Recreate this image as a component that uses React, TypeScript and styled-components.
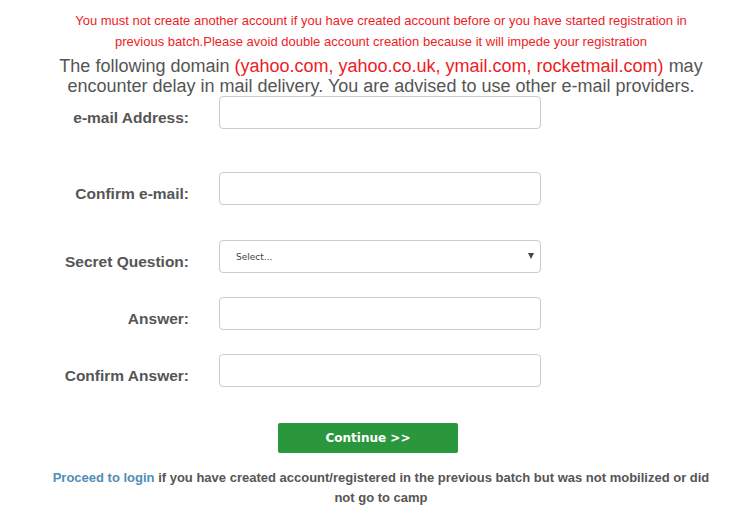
import React from 'react';
import styled, { createGlobalStyle } from 'styled-components';

const GlobalStyle = createGlobalStyle`
  body {
    margin: 0;
    background: #ffffff;
    font-family: "Liberation Sans", Arial, sans-serif;
  }
`;

const Page = styled.div`
  width: 762px;
  padding-top: 10px;
`;

const Warning = styled.p`
  margin: 0 auto;
  width: 625px;
  text-align: center;
  color: #ee1c25;
  font-size: 13px;
  line-height: 21px;
`;

const Notice = styled.p`
  margin: 4px auto 0;
  width: 680px;
  text-align: center;
  color: #555555;
  font-size: 18px;
  line-height: 20px;
`;

const Red = styled.span`
  color: #ee1c25;
`;

const Form = styled.form`
  display: flex;
  flex-direction: column;
  width: 541px;
`;

const Row = styled.div<{ gap: number }>`
  display: grid;
  grid-template-columns: 189px 322px;
  column-gap: 30px;
  align-items: start;
  margin-bottom: ${p => p.gap}px;
`;

const Label = styled.label`
  text-align: right;
  color: #555555;
  font-weight: 700;
  font-size: 15.5px;
  line-height: 17px;
  padding-top: 13px;
`;

const Input = styled.input`
  box-sizing: border-box;
  width: 322px;
  height: 33px;
  border: 1px solid #cccccc;
  border-radius: 4px;
  padding: 6px 12px;
  font-size: 12px;
  margin: 0;
`;

const SelectWrap = styled.div`
  position: relative;
  width: 322px;
`;

const Select = styled.select`
  box-sizing: border-box;
  width: 322px;
  height: 33px;
  border: 1px solid #cccccc;
  border-radius: 4px;
  padding: 0 12px 0 16px;
  font-family: "DejaVu Sans", Verdana, sans-serif;
  font-size: 9px;
  color: #444444;
  background: #ffffff;
  appearance: none;
  margin: 0;
`;

const Caret = styled.span`
  position: absolute;
  right: 7px;
  top: 13px;
  width: 0;
  height: 0;
  border-left: 3px solid transparent;
  border-right: 3px solid transparent;
  border-top: 6px solid #444444;
  pointer-events: none;
`;

const Actions = styled.div`
  display: flex;
  justify-content: center;
  width: 736px;
  margin-top: 36px;
`;

const Button = styled.button`
  width: 180px;
  height: 30px;
  background: #2a973c;
  color: #ffffff;
  border: none;
  border-radius: 2px;
  font-family: "DejaVu Sans", Verdana, sans-serif;
  font-size: 12px;
  font-weight: 600;
  padding: 0;
`;

const Footer = styled.p`
  margin: 15px auto 0;
  width: 670px;
  text-align: center;
  color: #555555;
  font-size: 13px;
  font-weight: 700;
  line-height: 20px;
`;

const LoginLink = styled.a`
  color: #4f8db8;
  text-decoration: none;
`;

const rows = [
  { label: 'e-mail Address:', gap: 43 },
  { label: 'Confirm e-mail:', gap: 35 },
  { label: 'Secret Question:', gap: 24, select: true },
  { label: 'Answer:', gap: 24 },
  { label: 'Confirm Answer:', gap: 0 },
];

const App: React.FC = () => {
  return (
    <Page>
      <GlobalStyle />
      <Warning>
        You must not create another account if you have created account before or you have started registration in
        previous batch.Please avoid double account creation because it will impede your registration
      </Warning>
      <Notice>
        The following domain <Red>(yahoo.com, yahoo.co.uk, ymail.com, rocketmail.com)</Red> may encounter delay in
        mail delivery. You are advised to use other e-mail providers.
      </Notice>
      <Form onSubmit={e => e.preventDefault()}>
        {rows.map(row => (
          <Row key={row.label} gap={row.gap}>
            <Label>{row.label}</Label>
            {row.select ? (
              <SelectWrap>
                <Select defaultValue="">
                  <option value="">Select...</option>
                </Select>
                <Caret />
              </SelectWrap>
            ) : (
              <Input type="text" />
            )}
          </Row>
        ))}
      </Form>
      <Actions>
        <Button type="submit">Continue &gt;&gt;</Button>
      </Actions>
      <Footer>
        <LoginLink href="#">Proceed to login</LoginLink> if you have created account/registered in the previous
        batch but was not mobilized or did not go to camp
      </Footer>
    </Page>
  );
};

export default App;
